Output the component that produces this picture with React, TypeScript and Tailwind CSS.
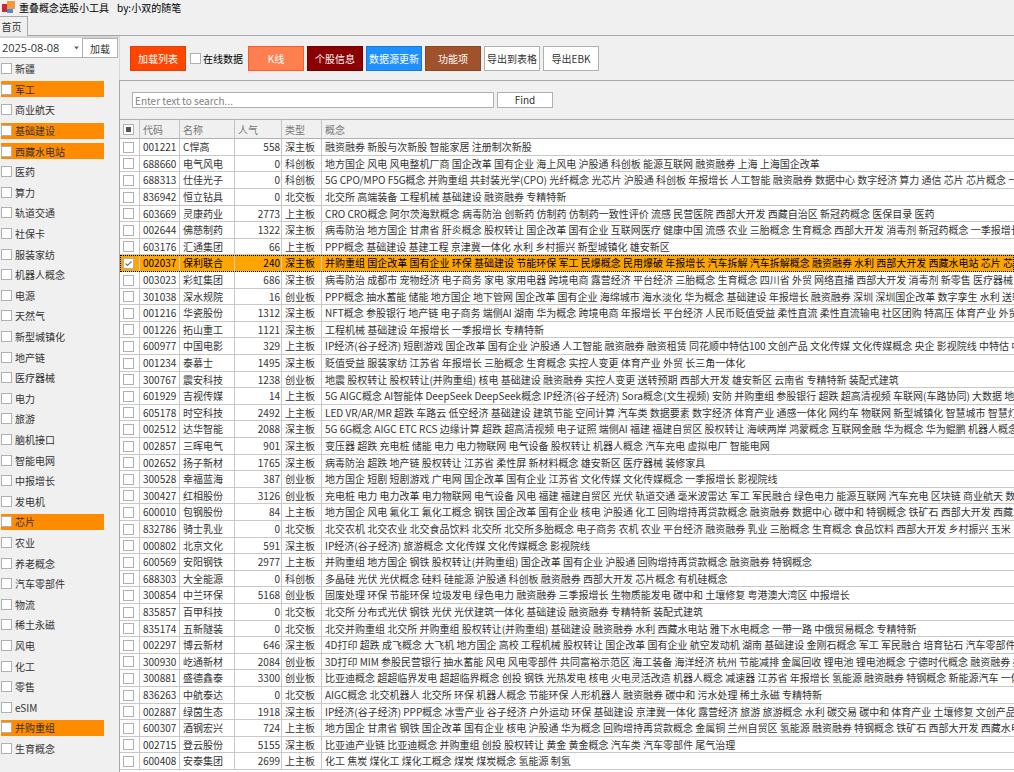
import React from "react";
import clsx from "clsx";

const tags: { name: string; active?: boolean }[] = [
  { name: "新疆" },
  { name: "军工", active: true },
  { name: "商业航天" },
  { name: "基础建设", active: true },
  { name: "西藏水电站", active: true },
  { name: "医药" },
  { name: "算力" },
  { name: "轨道交通" },
  { name: "社保卡" },
  { name: "服装家纺" },
  { name: "机器人概念" },
  { name: "电源" },
  { name: "天然气" },
  { name: "新型城镇化" },
  { name: "地产链" },
  { name: "医疗器械" },
  { name: "电力" },
  { name: "旅游" },
  { name: "脑机接口" },
  { name: "智能电网" },
  { name: "中报增长" },
  { name: "发电机" },
  { name: "芯片", active: true },
  { name: "农业" },
  { name: "养老概念" },
  { name: "汽车零部件" },
  { name: "物流" },
  { name: "稀土永磁" },
  { name: "风电" },
  { name: "化工" },
  { name: "零售" },
  { name: "eSIM" },
  { name: "并购重组", active: true },
  { name: "生育概念" },
];

type Stock = [code: string, name: string, heat: number, board: string, concepts: string];

const stocks: Stock[] = [
  ["001221", "C悍高", 558, "深主板", "融资融券 新股与次新股 智能家居 注册制次新股"],
  ["688660", "电气风电", 0, "科创板", "地方国企 风电 风电整机厂商 国企改革 国有企业 海上风电 沪股通 科创板 能源互联网 融资融券 上海 上海国企改革"],
  ["688313", "仕佳光子", 0, "科创板", "5G CPO/MPO F5G概念 并购重组 共封装光学(CPO) 光纤概念 光芯片 沪股通 科创板 年报增长 人工智能 融资融券 数据中心 数字经济 算力 通信 芯片 芯片概念 一季报增长"],
  ["836942", "恒立钻具", 0, "北交板", "北交所 高端装备 工程机械 基础建设 融资融券 专精特新"],
  ["603669", "灵康药业", 2773, "上主板", "CRO CRO概念 阿尔茨海默概念 病毒防治 创新药 仿制药 仿制药一致性评价 流感 民营医院 西部大开发 西藏自治区 新冠药概念 医保目录 医药"],
  ["002644", "佛慈制药", 1322, "深主板", "病毒防治 地方国企 甘肃省 肝炎概念 股权转让 国企改革 国有企业 互联网医疗 健康中国 流感 农业 三胎概念 生育概念 西部大开发 消毒剂 新冠药概念 一季报增长 医药"],
  ["603176", "汇通集团", 66, "上主板", "PPP概念 基础建设 基建工程 京津冀一体化 水利 乡村振兴 新型城镇化 雄安新区"],
  ["002037", "保利联合", 240, "深主板", "并购重组 国企改革 国有企业 环保 基础建设 节能环保 军工 民爆概念 民用爆破 年报增长 汽车拆解 汽车拆解概念 融资融券 水利 西部大开发 西藏水电站 芯片 芯片概念"],
  ["003023", "彩虹集团", 686, "深主板", "病毒防治 成都市 宠物经济 电子商务 家电 家用电器 跨境电商 露营经济 平台经济 三胎概念 生育概念 四川省 外贸 网络直播 西部大开发 消毒剂 新零售 医疗器械 医疗"],
  ["301038", "深水规院", 16, "创业板", "PPP概念 抽水蓄能 储能 地方国企 地下管网 国企改革 国有企业 海绵城市 海水淡化 华为概念 基础建设 年报增长 融资融券 深圳 深圳国企改革 数字孪生 水利 送转填权"],
  ["001216", "华瓷股份", 1312, "深主板", "NFT概念 参股银行 地产链 电子商务 端侧AI 湖南 华为概念 跨境电商 年报增长 平台经济 人民币贬值受益 柔性直流 柔性直流输电 社区团购 特高压 体育产业 外贸 消费"],
  ["001226", "拓山重工", 1121, "深主板", "工程机械 基础建设 年报增长 一季报增长 专精特新"],
  ["600977", "中国电影", 329, "上主板", "IP经济(谷子经济) 短剧游戏 国企改革 国有企业 沪股通 人工智能 融资融券 融资租赁 同花顺中特估100 文创产品 文化传媒 文化传媒概念 央企 影视院线 中特估 中字头"],
  ["001234", "泰慕士", 1495, "深主板", "贬值受益 服装家纺 江苏省 年报增长 三胎概念 生育概念 实控人变更 体育产业 外贸 长三角一体化"],
  ["300767", "震安科技", 1238, "创业板", "地震 股权转让 股权转让(并购重组) 核电 基础建设 融资融券 实控人变更 送转预期 西部大开发 雄安新区 云南省 专精特新 装配式建筑"],
  ["601929", "吉视传媒", 14, "上主板", "5G AIGC概念 AI智能体 DeepSeek DeepSeek概念 IP经济(谷子经济) Sora概念(文生视频) 安防 并购重组 参股银行 超跌 超高清视频 车联网(车路协同) 大数据 地方国企"],
  ["605178", "时空科技", 2492, "上主板", "LED VR/AR/MR 超跌 车路云 低空经济 基础建设 建筑节能 空间计算 汽车类 数据要素 数字经济 体育产业 通感一体化 网约车 物联网 新型城镇化 智慧城市 智慧灯杆 智能"],
  ["002512", "达华智能", 2088, "深主板", "5G 6G概念 AIGC ETC RCS 边缘计算 超跌 超高清视频 电子证照 端侧AI 福建 福建自贸区 股权转让 海峡两岸 鸿蒙概念 互联网金融 华为概念 华为鲲鹏 机器人概念 金融"],
  ["002857", "三晖电气", 901, "深主板", "变压器 超跌 充电桩 储能 电力 电力物联网 电气设备 股权转让 机器人概念 汽车充电 虚拟电厂 智能电网"],
  ["002652", "扬子新材", 1765, "深主板", "病毒防治 超跌 地产链 股权转让 江苏省 柔性屏 新材料概念 雄安新区 医疗器械 装修家具"],
  ["300528", "幸福蓝海", 387, "创业板", "地方国企 短剧 短剧游戏 广电网 国企改革 国有企业 江苏省 文化传媒 文化传媒概念 一季报增长 影视院线"],
  ["300427", "红相股份", 3126, "创业板", "充电桩 电力 电力改革 电力物联网 电气设备 风电 福建 福建自贸区 光伏 轨道交通 毫米波雷达 军工 军民融合 绿色电力 能源互联网 汽车充电 区块链 商业航天 数字经济"],
  ["600010", "包钢股份", 84, "上主板", "地方国企 风电 氟化工 氟化工概念 钢铁 国企改革 国有企业 核电 沪股通 化工 回购增持再贷款概念 融资融券 数据中心 碳中和 特钢概念 铁矿石 西部大开发 西藏水电站"],
  ["832786", "骑士乳业", 0, "北交板", "北交农机 北交农业 北交食品饮料 北交所 北交所多胎概念 电子商务 农机 农业 平台经济 融资融券 乳业 三胎概念 生育概念 食品饮料 西部大开发 乡村振兴 玉米"],
  ["000802", "北京文化", 591, "深主板", "IP经济(谷子经济) 旅游概念 文化传媒 文化传媒概念 影视院线"],
  ["600569", "安阳钢铁", 2977, "上主板", "并购重组 地方国企 钢铁 股权转让(并购重组) 国企改革 国有企业 沪股通 回购增持再贷款概念 融资融券 特钢概念"],
  ["688303", "大全能源", 0, "科创板", "多晶硅 光伏 光伏概念 硅料 硅能源 沪股通 科创板 融资融券 西部大开发 芯片概念 有机硅概念"],
  ["300854", "中兰环保", 5168, "创业板", "固废处理 环保 节能环保 垃圾发电 绿色电力 融资融券 三季报增长 生物质能发电 碳中和 土壤修复 粤港澳大湾区 中报增长"],
  ["835857", "百甲科技", 0, "北交板", "北交所 分布式光伏 钢铁 光伏 光伏建筑一体化 基础建设 融资融券 专精特新 装配式建筑"],
  ["835174", "五新隧装", 0, "北交板", "北交并购重组 北交所 并购重组 股权转让(并购重组) 基础建设 融资融券 水利 西藏水电站 雅下水电概念 一带一路 中俄贸易概念 专精特新"],
  ["002297", "博云新材", 646, "深主板", "4D打印 超跌 成飞概念 大飞机 地方国企 高校 工程机械 股权转让 国企改革 国有企业 航空发动机 湖南 基础建设 金刚石概念 军工 军民融合 培育钻石 汽车零部件 融资融券"],
  ["300930", "屹通新材", 2084, "创业板", "3D打印 MIM 参股民营银行 抽水蓄能 风电 风电零部件 共同富裕示范区 海工装备 海洋经济 杭州 节能减排 金属回收 锂电池 锂电池概念 宁德时代概念 融资融券 柔性屏"],
  ["300881", "盛德鑫泰", 3300, "创业板", "比亚迪概念 超超临界发电 超超临界概念 创投 钢铁 光热发电 核电 火电灵活改造 机器人概念 减速器 江苏省 年报增长 氢能源 融资融券 特钢概念 新能源汽车 一体化压铸"],
  ["836263", "中航泰达", 0, "北交板", "AIGC概念 北交机器人 北交所 环保 机器人概念 节能环保 人形机器人 融资融券 碳中和 污水处理 稀土永磁 专精特新"],
  ["002887", "绿茵生态", 1918, "深主板", "IP经济(谷子经济) PPP概念 冰雪产业 谷子经济 户外运动 环保 基础建设 京津冀一体化 露营经济 旅游 旅游概念 水利 碳交易 碳中和 体育产业 土壤修复 文创产品 污水处理"],
  ["600307", "酒钢宏兴", 724, "上主板", "地方国企 甘肃省 钢铁 国企改革 国有企业 核电 沪股通 华为概念 回购增持再贷款概念 金属铜 兰州自贸区 氢能源 融资融券 特钢概念 铁矿石 西部大开发 西藏水电站"],
  ["002715", "登云股份", 5155, "深主板", "比亚迪产业链 比亚迪概念 并购重组 创投 股权转让 黄金 黄金概念 汽车类 汽车零部件 尾气治理"],
  ["600408", "安泰集团", 2699, "上主板", "化工 焦炭 煤化工 煤化工概念 煤炭 煤炭概念 氢能源 制氢"],
];

const selectedCode = "002037";

const checkbox =
  "block size-[11px] shrink-0 appearance-none border border-[#b0b0b0] bg-white";
const button = "h-[25px] w-14 shrink-0 border text-center whitespace-nowrap";
const th = "border-y border-r border-y-[#b0b0b0] border-r-[#c4c4c4] py-0 pr-px pl-[3px] text-left font-normal";
const td = "border-r border-b border-[#c8c8c8] py-0 pr-px pl-[3px]";

function Logo() {
  return (
    <svg className="size-4 shrink-0" viewBox="0 0 16 16" aria-hidden="true">
      <rect x="2" y="4" width="5" height="8" fill="#c8283c" />
      <rect x="7" y="9" width="6" height="4" fill="#4a90d9" />
      <rect x="7" y="1" width="8" height="8" fill="#f09a3e" />
    </svg>
  );
}

function Sidebar() {
  return (
    <aside className="w-[119px] shrink-0 border-t-2 border-[#d4d4d4]">
      <div className="flex h-5 w-[118px]">
        <div className="relative w-[83px]">
          <select
            aria-label="日期"
            className="h-5 w-full appearance-none border-r border-b border-[#b0b0b0] bg-white pl-[2px] font-['Open_Sans'] text-[11px] text-[#333]"
          >
            <option>2025-08-08</option>
          </select>
          <svg className="pointer-events-none absolute top-2 right-1 h-1 w-[5px]" viewBox="0 0 5 4">
            <path d="M0 0.5h5L2.5 3.5z" fill="#666" />
          </svg>
        </div>
        <button className="h-5 flex-1 border border-l-0 border-[#b0b0b0] bg-white">加载</button>
      </div>

      <ul>
        {tags.map((tag) => (
          <li
            key={tag.name}
            className="flex h-[21px] items-center pl-px nth-[5n]:h-5 nth-[5n+2]:h-5"
          >
            <label
              className={clsx(
                "flex h-4 w-[103px] items-center gap-[3px]",
                tag.active && "bg-[#ff8c00]"
              )}
            >
              <input type="checkbox" className={checkbox} />
              {tag.name}
            </label>
          </li>
        ))}
      </ul>
    </aside>
  );
}

function Toolbar() {
  return (
    <div className="flex h-11 items-center border-l border-[#d8d8d8] pl-[10px]">
      <button className={clsx(button, "border-[#e04010] bg-[#ff4500] text-white")}>加载列表</button>
      <label className="flex w-[62px] shrink-0 items-center gap-[2px] pl-1 whitespace-nowrap text-black">
        <input type="checkbox" className={checkbox} />
        在线数据
      </label>
      <div className="flex items-center gap-[3px]">
        <button className={clsx(button, "border-[#ff5a28] bg-[#ff7f50] text-white")}>K线</button>
        <button className={clsx(button, "border-[#700000] bg-[#8b0000] text-white")}>个股信息</button>
        <button className={clsx(button, "border-[#1478dc] bg-[#1e90ff] text-white")}>数据源更新</button>
        <button className={clsx(button, "border-[#8a4522] bg-[#a0522d] text-white")}>功能项</button>
        <button className={clsx(button, "border-[#b0b0b0] bg-white")}>导出到表格</button>
        <button className={clsx(button, "border-[#b0b0b0] bg-white")}>导出EBK</button>
      </div>
    </div>
  );
}

function StockTable() {
  return (
    <table className="w-full table-fixed border-separate border-spacing-0 whitespace-nowrap">
      <colgroup>
        <col className="w-5" />
        <col className="w-10" />
        <col className="w-[55px]" />
        <col className="w-[47px]" />
        <col className="w-10" />
        <col />
      </colgroup>
      <thead>
        <tr className="h-5 bg-[#f0f0f0] text-[#777]">
          <th className={th}>
            <span className="relative block size-[11px]">
              <input type="checkbox" aria-label="全选" className={checkbox} />
              <span className="pointer-events-none absolute inset-[3px] bg-[#555]" />
            </span>
          </th>
          <th className={th}>代码</th>
          <th className={th}>名称</th>
          <th className={th}>人气</th>
          <th className={th}>类型</th>
          <th className="border-y border-[#b0b0b0] px-[3px] py-0 text-left font-normal">概念</th>
        </tr>
      </thead>
      <tbody>
        {stocks.map(([code, name, heat, board, concepts]) => {
          const selected = code === selectedCode;
          return (
            <tr
              key={code}
              className={clsx(
                "h-[17px] leading-[14px] nth-[5n]:h-4 nth-[5n+2]:h-4",
                selected
                  ? "bg-[#ffa500] text-black outline-1 -outline-offset-1 outline-dotted outline-black"
                  : "bg-white"
              )}
            >
              <td className={td}>
                <span className="relative block size-[11px]">
                  <input
                    type="checkbox"
                    aria-label={name}
                    defaultChecked={selected}
                    className={checkbox}
                  />
                  {selected && (
                    <svg className="pointer-events-none absolute inset-0" viewBox="0 0 11 11">
                      <path d="M2.5 5.5l2 2 4-4" fill="none" stroke="#777" strokeWidth="1.2" />
                    </svg>
                  )}
                </span>
              </td>
              <td className={td}>{code}</td>
              <td className={td}>{name}</td>
              <td className={clsx(td, "text-right")}>{heat}</td>
              <td className={td}>{board}</td>
              <td className="overflow-hidden border-b border-[#c8c8c8] py-0 pl-[3px]">{concepts}</td>
            </tr>
          );
        })}
      </tbody>
    </table>
  );
}

export default function App() {
  return (
    <div className="flex h-screen flex-col overflow-hidden bg-[#f0f0f0] font-['Noto_Sans_CJK_SC',sans-serif] text-[10px] leading-[15px] text-[#333]">
      <header className="flex h-4 shrink-0 items-center gap-[3px]">
        <Logo />
        <h1 className="flex gap-2 leading-[14px] text-black">
          <span>重叠概念选股小工具</span>
          <span>by:小双的随笔</span>
        </h1>
      </header>

      <nav className="flex h-5 shrink-0">
        <button className="w-7 border-t border-r border-[#a8a8a8] pr-1 text-center whitespace-nowrap">首页</button>
        <div className="flex-1 border-b border-[#a8a8a8]" />
      </nav>

      <div className="flex min-h-0 flex-1">
        <Sidebar />
        <main className="flex min-w-0 flex-1 flex-col">
          <Toolbar />
          <div className="min-h-0 flex-1 overflow-hidden border-t border-l border-[#a8a8a8] bg-white">
            <div className="flex h-[38px] items-center gap-[3px] bg-[#f0f0f0] pl-3">
              <input
                type="text"
                aria-label="搜索"
                placeholder="Enter text to search..."
                className="h-4 w-[362px] border border-[#b0b0b0] bg-white px-[2px] leading-[14px] outline-none placeholder:text-[#808080]"
              />
              <button className="h-4 w-14 border border-[#b0b0b0] bg-white leading-[14px]">Find</button>
            </div>
            <StockTable />
          </div>
        </main>
      </div>
    </div>
  );
}
